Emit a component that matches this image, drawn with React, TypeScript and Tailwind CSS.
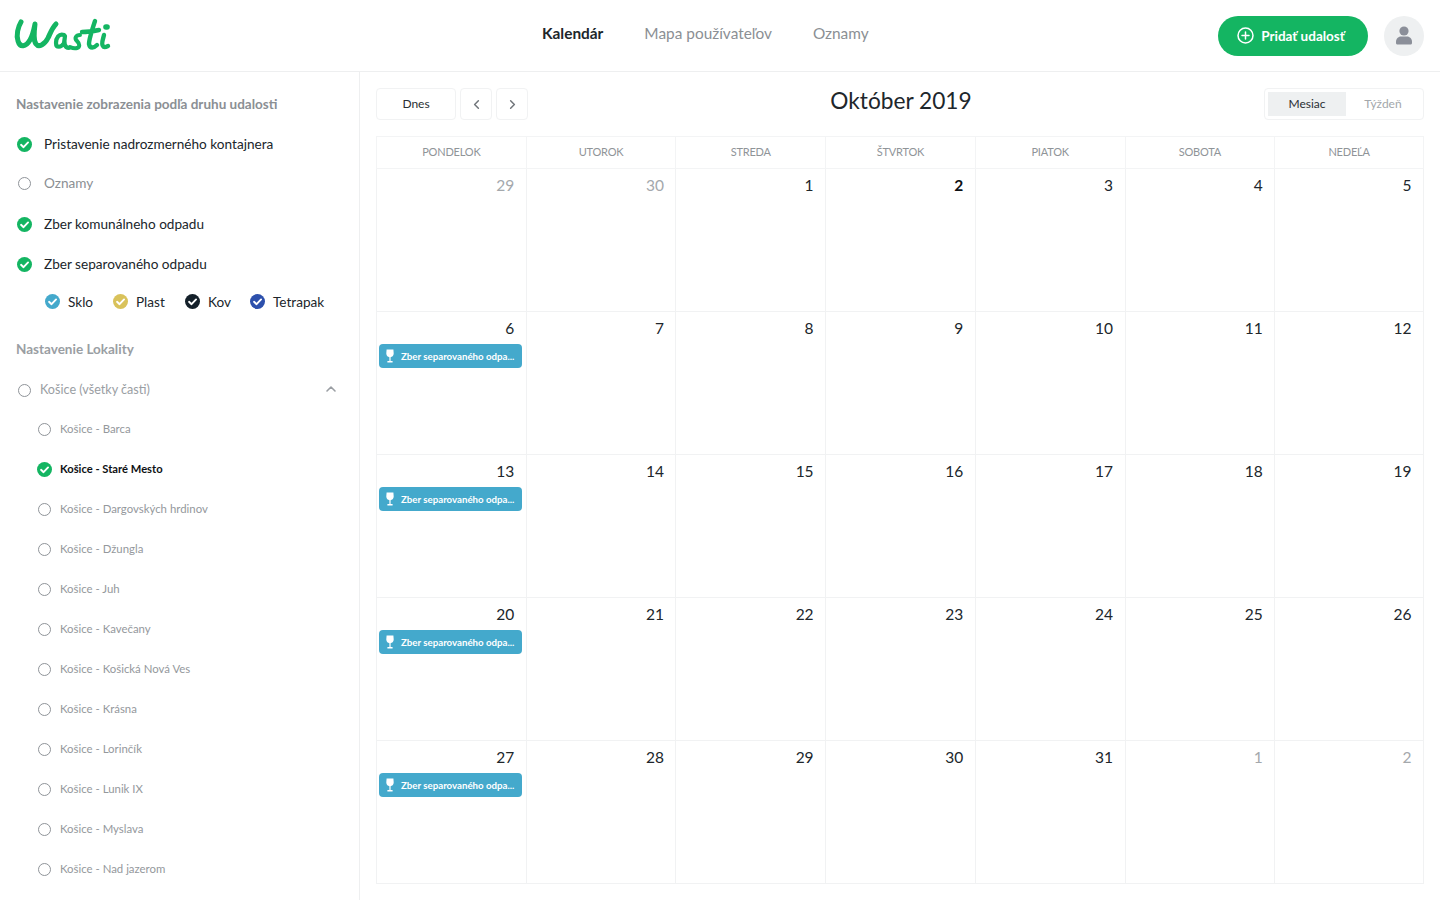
import React from 'react'
import { ChevronLeft, ChevronRight, ChevronUp } from 'lucide-react'

const font = { fontFamily: '"Lato", "Noto Sans", sans-serif' }

function Logo() {
  return (
    <svg width="98" height="36" viewBox="0 0 98 36" fill="none" stroke="#14b562" strokeLinecap="round" strokeLinejoin="round">
      <path d="M7 4 C4 9 2 17 4 23 C6 30 12 29 16 22 C19 17 20 11 21 6 C20 14 19 22 22 26 C25 30 31 26 34 20 C36 16 38 10 42 6" strokeWidth="5" />
      <path d="M50 17 C45 15 42 20 42 25 C42 30 47 30 50 25 L51 18 C50 24 50 30 55 30" strokeWidth="4.2" />
      <path d="M66 17 C62 17 60 20 63 23 C66 26 66 29 63 30 C60 31 58 30 56 29" strokeWidth="4" />
      <path d="M81 3 C78 12 75 22 75 26 C76 31 80 30 83 27 M68 14 C74 14 80 13 85 12" strokeWidth="4.4" />
      <path d="M90 17 C89 21 87 26 89 28 C90 30 92 29 94 28" strokeWidth="4.4" />
      <path d="M92 9 L93 9" strokeWidth="5.6" />
    </svg>
  )
}

function Check({ color = '#14b562', size = 15 }: { color?: string; size?: number }) {
  return (
    <svg width={size} height={size} viewBox="0 0 16 16" className="shrink-0">
      <circle cx="8" cy="8" r="8" fill={color} />
      <path d="M4.3 8.3 L7 10.9 L11.8 5.8" fill="none" stroke="#fff" strokeWidth="2" strokeLinecap="round" strokeLinejoin="round" />
    </svg>
  )
}

function Radio() {
  return <span className="block w-[11px] h-[11px] shrink-0 rounded-full border border-[#8f9499] box-content" />
}

function Glass() {
  return (
    <svg width="8" height="14" viewBox="0 0 8 14" fill="#fff" className="shrink-0">
      <path d="M0.6 0.5 H7.4 L7.7 4.5 C7.7 6.8 6 8 4.6 8.2 V12 H6.6 V13.5 H1.4 V12 H3.4 V8.2 C2 8 0.3 6.8 0.3 4.5 Z" />
    </svg>
  )
}

const locations = [
  'Košice - Barca',
  'Košice - Staré Mesto',
  'Košice - Dargovských hrdinov',
  'Košice - Džungla',
  'Košice - Juh',
  'Košice - Kavečany',
  'Košice - Košická Nová Ves',
  'Košice - Krásna',
  'Košice - Lorinčík',
  'Košice - Lunik IX',
  'Košice - Myslava',
  'Košice - Nad jazerom',
]

const days = ['PONDELOK', 'UTOROK', 'STREDA', 'ŠTVRTOK', 'PIATOK', 'SOBOTA', 'NEDEĽA']

const weeks = [
  [29, 30, 1, 2, 3, 4, 5],
  [6, 7, 8, 9, 10, 11, 12],
  [13, 14, 15, 16, 17, 18, 19],
  [20, 21, 22, 23, 24, 25, 26],
  [27, 28, 29, 30, 31, 1, 2],
]

function Sidebar() {
  return (
    <aside className="w-[360px] shrink-0 h-full border-r border-[#eeeff0] overflow-hidden pl-4 pr-[22px]">
      <h3 className="h-[20px] mt-[22px] text-[13.5px] leading-[20px] font-bold text-[#8b8f94]">Nastavenie zobrazenia podľa druhu udalosti</h3>
      <div className="mt-[10px] text-[13.6px] text-[#20262b]">
        <div className="h-10 flex items-center gap-[12px] pl-[1px]"><Check /><span>Pristavenie nadrozmerného kontajnera</span></div>
        <div className="h-10 flex items-center gap-[13px] pl-[2px] text-[#8b8f94] -mt-[1px]"><Radio /><span>Oznamy</span></div>
        <div className="h-10 flex items-center gap-[12px] pl-[1px] mt-[1px]"><Check /><span>Zber komunálneho odpadu</span></div>
        <div className="h-10 flex items-center gap-[12px] pl-[1px]"><Check /><span>Zber separovaného odpadu</span></div>
        <div className="h-9 flex items-center pl-[29px]">
          <div className="w-[68px] flex items-center gap-[8px]"><Check color="#44a9cc" /><span>Sklo</span></div>
          <div className="w-[72px] flex items-center gap-[8px]"><Check color="#d9c25b" /><span>Plast</span></div>
          <div className="w-[65px] flex items-center gap-[8px]"><Check color="#14202a" /><span>Kov</span></div>
          <div className="flex items-center gap-[8px]"><Check color="#2d50ac" /><span>Tetrapak</span></div>
        </div>
      </div>
      <h3 className="mt-[19px] h-5 text-[13.5px] leading-5 font-bold text-[#9a9ea3]">Nastavenie Lokality</h3>
      <div className="mt-[11px] h-10 flex items-center pl-[2px] text-[12.6px] text-[#9a9ea3]">
        <Radio />
        <span className="ml-[9px] flex-1">Košice (všetky časti)</span>
        <ChevronUp size={16} strokeWidth={2.4} className="text-[#9a9ea3] mr-[-2px] mb-[2px]" />
      </div>
      <div className="-mt-[1px]">
        {locations.map((name) =>
          name === 'Košice - Staré Mesto' ? (
            <div key={name} className="h-10 flex items-center pl-[21px] gap-[8px] text-[11.2px] font-bold text-[#0e1114]">
              <Check />
              <span>{name}</span>
            </div>
          ) : (
            <div key={name} className="h-10 flex items-center pl-[22px] gap-[9px] text-[11.4px] text-[#94989c]">
              <Radio />
              <span>{name}</span>
            </div>
          ),
        )}
      </div>
    </aside>
  )
}

function Calendar() {
  return (
    <main className="flex-1 px-4 pt-4">
      <div className="relative flex items-center justify-between h-8">
        <div className="flex items-center gap-1">
          <button className="w-20 h-8 rounded border border-[#f1f2f3] text-[12px] text-[#2a2f33]">Dnes</button>
          <button className="w-8 h-8 rounded border border-[#f1f2f3] flex items-center justify-center text-[#70757a]">
            <ChevronLeft size={15} strokeWidth={2.4} />
          </button>
          <button className="w-8 h-8 rounded border border-[#f1f2f3] flex items-center justify-center text-[#70757a]">
            <ChevronRight size={15} strokeWidth={2.4} />
          </button>
        </div>
        <h2 className="absolute left-0 right-0 -top-[3px] pl-[2px] text-center text-[22.7px] leading-8 text-[#20262b] pointer-events-none">Október 2019</h2>
        <div className="flex w-[160px] h-8 items-center rounded border border-[#f1f2f3] p-[3px] text-[12px]">
          <span className="w-[78px] h-6 flex items-center justify-center bg-[#eef0f1] text-[#2a2f33]">Mesiac</span>
          <span className="flex-1 text-center text-[#a3a7ab]">Týždeň</span>
        </div>
      </div>
      <div className="mt-4 border-t border-r border-l border-[#f3f4f5] grid grid-cols-[repeat(6,149.71px)_1fr]">
        {days.map((d, i) => (
          <div key={d} className={`h-[32px] pb-[1px] flex items-center justify-center border-b border-[#f3f4f5] text-[11px] tracking-[-0.2px] text-[#8f9498] ${i < 6 ? 'border-r' : ''}`}>
            {d}
          </div>
        ))}
      </div>
      <div className="grid grid-cols-[repeat(6,149.71px)_1fr] border-l border-r border-b border-[#f1f2f3]">
        {weeks.flatMap((week, w) =>
          week.map((n, i) => {
            const muted = (w === 0 && i < 2) || (w === 4 && i > 4)
            const today = w === 0 && i === 3
            return (
              <div key={`${w}-${i}`} className={`pt-[4px] pl-[2px] pr-[4px] border-[#f1f2f3] ${i < 6 ? 'border-r' : ''} ${w < 4 ? 'h-[143px] border-b' : 'h-[142px]'}`}>
                <div className={`h-6 pr-[7.5px] text-right text-[15.5px] leading-6 ${muted ? 'text-[#a4a8ac]' : today ? 'text-[#0e1114] font-bold' : 'text-[#20262b]'}`}>{n}</div>
                {i === 0 && w > 0 && (
                  <div className="mt-[4px] h-6 rounded bg-[#44a9cc] flex items-center gap-[7px] pl-[7px] text-[9.7px] font-bold text-white whitespace-nowrap">
                    <Glass />
                    <span>Zber separovaného odpa...</span>
                  </div>
                )}
              </div>
            )
          }),
        )}
      </div>
    </main>
  )
}

export default function App() {
  return (
    <div className="w-[1440px] h-[900px] overflow-hidden bg-white flex flex-col" style={font}>
      <header className="h-[72px] shrink-0 border-b border-[#eeeff0] relative flex items-center justify-between pl-[14px] pr-4">
        <Logo />
        <nav className="absolute left-[542px] top-[23px] flex items-center gap-[41px] text-[15.4px] leading-5 text-[#8b8f94]">
          <span className="font-bold text-[#20262b]">Kalendár</span>
          <span>Mapa používateľov</span>
          <span>Oznamy</span>
        </nav>
        <div className="flex items-center gap-4">
          <button className="w-[150px] h-10 pr-[4px] rounded-full bg-[#14b562] text-white text-[13.5px] font-bold flex items-center justify-center gap-[7px]">
            <svg width="17" height="17" viewBox="0 0 17 17" fill="none" stroke="#fff" strokeWidth="1.5" strokeLinecap="round">
              <circle cx="8.5" cy="8.5" r="7.5" />
              <path d="M8.5 5 V12 M5 8.5 H12" />
            </svg>
            <span className="pt-[1px]">Pridať udalosť</span>
          </button>
          <div className="w-10 h-10 rounded-full bg-[#eef0f1] flex items-center justify-center">
            <svg width="16" height="19" viewBox="0 0 16 19" fill="#8b8f99">
              <circle cx="8" cy="5" r="4.6" />
              <path d="M0 16 C0 12 3 10.5 5 10.5 H11 C13 10.5 16 12 16 16 V17 C16 18 15 18.5 14.5 18.5 H1.5 C1 18.5 0 18 0 17 Z" />
            </svg>
          </div>
        </div>
      </header>
      <div className="flex flex-1 min-h-0">
        <Sidebar />
        <Calendar />
      </div>
    </div>
  )
}
